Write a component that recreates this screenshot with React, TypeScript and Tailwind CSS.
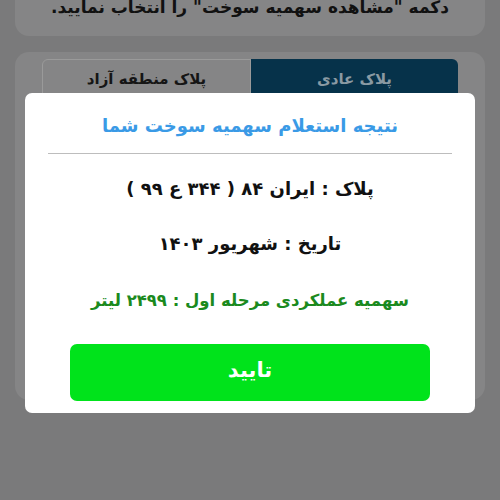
export default function App() {
  return (
    <div
      dir="rtl"
      className="relative h-[500px] w-[500px] overflow-hidden bg-[#7a7a7b] font-['DejaVu_Sans',sans-serif]"
    >
      {/* Instructions card (cut off at top) */}
      <div className="mx-[15px] -mt-[14px] h-[50px] rounded-b-[14px] bg-[#858586] pt-[6px] text-center text-[17px] font-bold leading-[30px] whitespace-nowrap text-[#111]">
        دکمه "مشاهده سهمیه سوخت" را انتخاب نمایید.
      </div>

      {/* Plate form card */}
      <div className="mx-[15px] mt-[16px] h-[348px] rounded-[14px] bg-[#858586] px-[27px] pt-[7px]">
        <div className="flex h-[40px]">
          <button className="flex-1 rounded-tr-[6px] bg-[#06324a] text-[15px] font-bold text-[#8a9aa3]">
            پلاک عادی
          </button>
          <button className="flex-1 rounded-tl-[6px] border border-[#9a9a9a] text-[15px] font-bold text-[#151515]">
            پلاک منطقه آزاد
          </button>
        </div>
      </div>

      {/* Result modal */}
      <div className="absolute left-[25px] top-[93px] w-[450px] rounded-[7px] bg-white px-[23px] pb-[12px] pt-[18px] text-center">
        <h2 className="text-[18px] font-bold leading-[30px] text-[#3a9ae6]">
          نتیجه استعلام سهمیه سوخت شما
        </h2>
        <div className="mt-[12px] h-px bg-[#bdbdbd]" />
        <p className="mt-[21px] text-[18px] font-bold leading-[28px] text-[#111]">
          پلاک : ایران ۸۴ ( ۳۴۴ ع ۹۹ )
        </p>
        <p className="mt-[27px] text-[18px] font-bold leading-[28px] text-[#111]">
          تاریخ :  شهریور ۱۴۰۳
        </p>
        <p className="mt-[29px] text-[16.5px] font-bold leading-[28px] text-[#1b8a1e]">
          سهمیه عملکردی مرحله اول :  ۲۴۹۹ لیتر
        </p>
        <button className="mx-auto mt-[29px] flex h-[57px] w-[360px] items-center justify-center rounded-[7px] bg-[#00e31b] pb-[4px] text-[21px] font-bold text-white">
          تایید
        </button>
      </div>
    </div>
  );
}
